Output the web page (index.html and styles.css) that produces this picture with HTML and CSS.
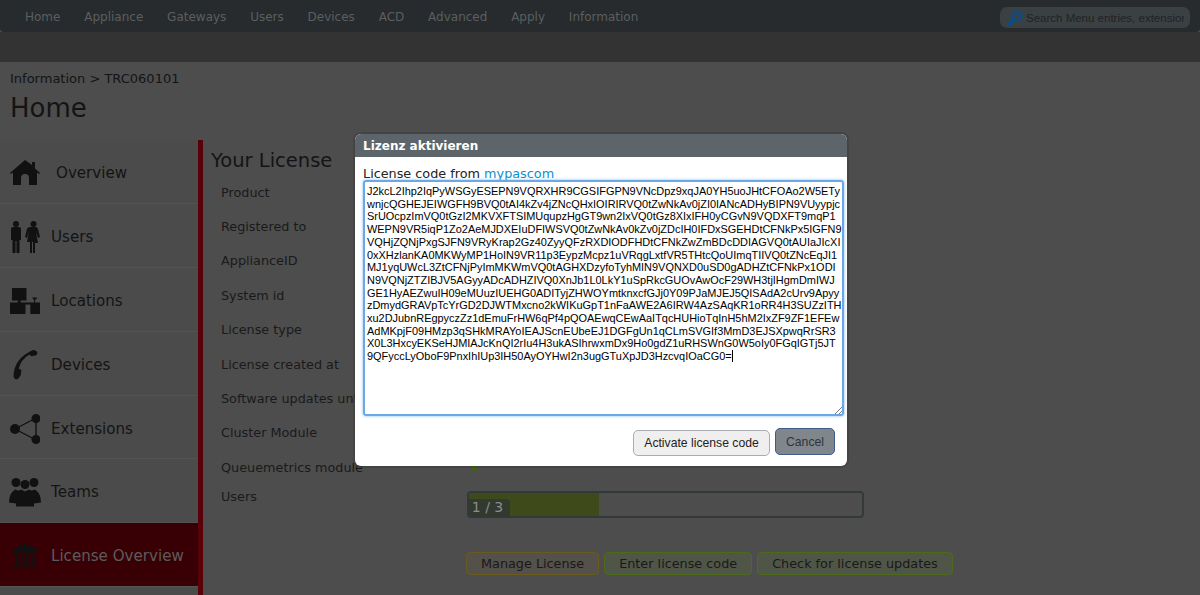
FILE: index.html
```html
<!DOCTYPE html>
<html lang="en">
<head>
<meta charset="utf-8">
<title>License Overview</title>
<link rel="stylesheet" href="styles.css">
</head>
<body>
<header class="topnav">
  <nav class="menu">
    <a>Home</a><a>Appliance</a><a>Gateways</a><a>Users</a><a>Devices</a><a>ACD</a><a>Advanced</a><a>Apply</a><a>Information</a>
  </nav>
  <div class="search">
    <svg class="search-icon" viewBox="0 0 16 16"><circle cx="10" cy="6" r="4.300" fill="none" stroke="#0d4c86" stroke-width="2.800"/><path d="M6.500 9.500 2 14" stroke="#0d4c86" stroke-width="3.600" stroke-linecap="round"/></svg>
    <span class="search-text">Search Menu entries, extensions</span>
  </div>
</header>
<div class="band"></div>
<main class="panel">
  <div class="crumb">Information &gt; TRC060101</div>
  <h1 class="title">Home</h1>
  <div class="columns">
    <aside class="side">
      <div class="item first">
        <svg class="ico" viewBox="0 0 30 26"><path d="M15 0 0 13l1 1 2-1.500V25h8v-7a4 4 0 0 1 8 0v7h8V12.500l2 1.500 1-1-5-4.500V2h-3v3z"/></svg>
        <span>Overview</span>
      </div>
      <div class="item">
        <svg class="ico tall" viewBox="0 0 30 32"><circle cx="6" cy="3" r="3"/><path d="M1 8q0-2 2-2h6q2 0 2 2v11H9.500v13H6.500V20h-1v12H2.500V19H1z"/><circle cx="23.500" cy="3" r="3"/><path d="M21 6h5q1 0 2 2l2 8-2 1-2-6 2 11h-3v11h-2V21h-1v11h-2V21h-3l2-11-2 7-2-1 2-8q1-2 3-2z"/></svg>
        <span>Users</span>
      </div>
      <div class="item">
        <svg class="ico" viewBox="0 0 31 27"><path d="M2 0h15v13h-6v2H8v-2H2zM0 15h31v2H0zM0 17h16v10H0zM21 17h10v10H21zM23 10h5l-1 2h-1v3h-1v-3h-1z"/></svg>
        <span>Locations</span>
      </div>
      <div class="item">
        <svg class="ico" viewBox="0 0 30 34"><path d="M24 0q4 0 5 3l-1 3-6 1-2-2Q10 11 8 21l3 2-1 6-3 4q-4 1-5-3Q2 10 24 0z"/></svg>
        <span>Devices</span>
      </div>
      <div class="item">
        <svg class="ico" viewBox="0 0 30 30"><path d="M5 15 26 4M5 15l21 11M26 4v22" fill="none" stroke="#111" stroke-width="1.400"/><circle cx="5" cy="15" r="5"/><circle cx="26" cy="4.500" r="4.500"/><circle cx="26" cy="25.500" r="4.500"/></svg>
        <span>Extensions</span>
      </div>
      <div class="item">
        <svg class="ico wide" viewBox="0 0 32 29"><circle cx="7" cy="5" r="4.500"/><circle cx="25" cy="5" r="4.500"/><circle cx="16" cy="7" r="4.500"/><path d="M0 25q0-9 6-13l3 1q2 0 3-1l4 2 4-2q1 1 3 1l3-1q6 4 6 13l-7 1v3H7v-3z"/></svg>
        <span>Teams</span>
      </div>
      <div class="item active">
        <svg class="ico" viewBox="-1 -1 32 28"><path d="M15 0 1 6v2h28V6zM3 9h24v2H3zM5 12h3v9H5zM11 12h3v9h-3zM16 12h3v9h-3zM22 12h3v9h-3zM3 22h24v2H3zM1 24.500h28V26H1z"/></svg>
        <span>License Overview</span>
      </div>
      <div class="item"></div>
    </aside>
    <section class="content">
      <h2 class="heading">Your License</h2>
      <div class="row"><span class="label">Product</span></div>
      <div class="row"><span class="label">Registered to</span></div>
      <div class="row"><span class="label">ApplianceID</span></div>
      <div class="row"><span class="label">System id</span></div>
      <div class="row"><span class="label">License type</span></div>
      <div class="row"><span class="label">License created at</span></div>
      <div class="row"><span class="label">Software updates until</span></div>
      <div class="row"><span class="label">Cluster Module</span></div>
      <div class="row"><span class="label">Queuemetrics module</span><span class="tick"></span></div>
      <div class="row users">
        <span class="label">Users</span>
        <div class="bar"><div class="fill"></div><span class="count">1 / 3</span></div>
      </div>
      <div class="actions">
        <button class="btn amber">Manage License</button>
        <button class="btn green">Enter license code</button>
        <button class="btn green">Check for license updates</button>
      </div>
    </section>
  </div>
</main>
<div class="dialog">
  <div class="dialog-title">Lizenz aktivieren</div>
  <div class="dialog-body">
    <div class="code-label">License code from <a class="link">mypascom</a></div>
    <div class="code">J2kcL2Ihp2IqPyWSGyESEPN9VQRXHR9CGSIFGPN9VNcDpz9xqJA0YH5uoJHtCFOAo2W5ETy
wnjcQGHEJEIWGFH9BVQ0tAI4kZv4jZNcQHxIOIRIRVQ0tZwNkAv0jZI0IANcADHyBIPN9VUyypjc
SrUOcpzImVQ0tGzI2MKVXFTSIMUqupzHgGT9wn2IxVQ0tGz8XIxIFH0yCGvN9VQDXFT9mqP1
WEPN9VR5iqP1Zo2AeMJDXEIuDFIWSVQ0tZwNkAv0kZv0jZDcIH0IFDxSGEHDtCFNkPx5IGFN9
VQHjZQNjPxgSJFN9VRyKrap2Gz40ZyyQFzRXDIODFHDtCFNkZwZmBDcDDIAGVQ0tAUIaJIcXI
0xXHzlanKA0MKWyMP1HoIN9VR11p3EypzMcpz1uVRqgLxtfVR5THtcQoUImqTIIVQ0tZNcEqJI1
MJ1yqUWcL3ZtCFNjPyImMKWmVQ0tAGHXDzyfoTyhMIN9VQNXD0uSD0gADHZtCFNkPx1ODI
N9VQNjZTZIBJV5AGyyADcADHZIVQ0XnJb1L0LkY1uSpRkcGUOvAwOcF29WH3tjIHgmDmIWJ
GE1HyAEZwuIH09eMUuzIUEHG0ADITyjZHWOYmtknxcfGJj0Y09PJaMJEJ5QISAdA2cUrv9Apyy
zDmydGRAVpTcYrGD2DJWTMxcno2kWIKuGpT1nFaAWE2A6IRW4AzSAqKR1oRR4H3SUZzITH
xu2DJubnREgpyczZz1dEmuFrHW6qPf4pQOAEwqCEwAaITqcHUHioTqInH5hM2IxZF9ZF1EFEw
AdMKpjF09HMzp3qSHkMRAYoIEAJScnEUbeEJ1DGFgUn1qCLmSVGIf3MmD3EJSXpwqRrSR3
X0L3HxcyEKSeHJMIAJcKnQI2rIu4H3ukASIhrwxmDx9Ho0gdZ1uRHSWnG0W5oIy0FGqIGTj5JT
9QFyccLyOboF9PnxIhIUp3IH50AyOYHwI2n3ugGTuXpJD3HzcvqIOaCG0=<span class="caret"></span><svg class="grip" viewBox="0 0 8 8"><path d="M1 8 8 1M5 8l3-3" stroke="#777" fill="none"/></svg></div>
    <div class="dialog-actions">
      <button class="dbtn activate">Activate license code</button>
      <button class="dbtn cancel">Cancel</button>
    </div>
  </div>
</div>
</body>
</html>
```
FILE: styles.css
```css
* { box-sizing: border-box; }
html, body { margin: 0; height: 595px; overflow: hidden; }
body {
  background: #4d4d4d;
  color: #141414;
  font-family: "DejaVu Sans", Verdana, sans-serif;
  display: flex;
  flex-direction: column;
}
.topnav {
  height: 32px;
  flex: none;
  background: #272b2d;
  display: flex;
  align-items: center;
  justify-content: space-between;
  padding: 0 10px 0 25px;
  border-radius: 0 0 4px 4px;
}
.menu { display: flex; gap: 23.800px; font-size: 12px; color: #5a5f60; padding-top: 1px; }
.search {
  width: 190px;
  height: 21px;
  margin-top: 3px;
  background: #3b4043;
  border-radius: 7px;
  display: flex;
  align-items: center;
  padding: 0 6px 0 7px;
  gap: 3px;
  overflow: hidden;
}
.search-icon { width: 16px; height: 16px; flex: none; }
.search-text {
  font: 11.500px "Liberation Sans", Arial, sans-serif;
  color: #1f2325;
  white-space: nowrap;
  overflow: hidden;
}
.band { height: 30px; flex: none; background: #333; }
.panel { flex: 1; min-height: 0; border-radius: 5px 5px 0 0; padding-top: 9px; overflow: hidden; }
.crumb { font-size: 13px; line-height: 16px; padding-left: 10px; }
.title { font-size: 26px; font-weight: 400; line-height: 30px; margin: 6px 0 17px; padding-left: 10px; }
.columns { display: flex; }
.side { width: 203px; flex: none; border-right: 5px solid #5a0008; height: 460px; }
.item {
  height: 63.900px;
  display: flex;
  align-items: center;
  gap: 11px;
  padding: 3px 0 0 10px;
  font-size: 15.100px;
  border-bottom: 1px solid #535353;
  background: #4b4b4b;
}
.item.first span { margin-left: 5px; }
.item.active { background: #380005; color: #5c5c5c; border-bottom-color: #555; }
.ico { width: 30px; height: 30px; flex: none; fill: #111; }
.ico.tall { height: 32px; }
.ico.wide { width: 32px; margin-left: -1px; margin-right: -1px; }
.content { flex: 1; padding-left: 8px; }
.heading { font-size: 19.500px; font-weight: 400; line-height: 24px; margin: 9px 0 0; height: 26px; }
.row { display: flex; height: 34.400px; align-items: center; padding-left: 10px; font-size: 12.800px; color: #1a1a1a; }
.label { width: 246px; flex: none; white-space: nowrap; }
.tick { width: 0; height: 0; border: 4px solid transparent; border-top: 6px solid #3e6a00; border-bottom: 0; margin: 3px 0 0 3px; }
.row.users { height: auto; align-items: flex-start; }
.users .label { line-height: 24px; }
.bar {
  width: 397px;
  height: 27px;
  margin-top: 6px;
  border: 2px solid #33393b;
  border-radius: 4px;
  position: relative;
  overflow: hidden;
}
.fill { width: 130px; height: 100%; background: #3f4a1a; }
.count {
  position: absolute;
  left: 0;
  bottom: 0;
  width: 41px;
  height: 17px;
  padding-right: 4px;
  background: #32392f;
  border-top-right-radius: 4px;
  color: #8c8c8c;
  font-size: 14px;
  line-height: 16px;
  text-align: center;
}
.actions { display: flex; gap: 5px; margin: 34px 0 0 255px; }
.btn {
  height: 23px;
  border-radius: 4px;
  font: 12.800px "DejaVu Sans", Verdana, sans-serif;
  color: #191919;
  padding: 0 14px;
  white-space: nowrap;
}
.amber { background: #54504a; border: 1px solid #6b5a1e; }
.green { background: #4f5647; border: 1px solid #4d6a1a; }
.dialog {
  position: absolute;
  left: 355px;
  top: 134px;
  width: 492px;
  height: 332px;
  background: #fff;
  border-radius: 6px;
  overflow: hidden;
  box-shadow: 0 0 0 2px rgba(60, 60, 60, .5);
  display: flex;
  flex-direction: column;
}
.dialog-title {
  height: 23px;
  flex: none;
  background: #5e656a;
  color: #fff;
  font-size: 12px;
  font-weight: 700;
  line-height: 24px;
  padding-left: 8px;
}
.dialog-body { flex: 1; padding: 10px 3px 0 8px; }
.code-label { font-size: 12.800px; line-height: 14px; color: #222; margin-bottom: -1px; white-space: nowrap; }
.link { color: #0a8fd0; }
.code {
  height: 236px;
  border: 2px solid #6aa8e8;
  border-radius: 3px;
  box-shadow: 0 0 3px #7fb6ee;
  padding: 3px 2px;
  font: 10.950px/12.700px "Liberation Sans", Arial, sans-serif;
  color: #000;
  white-space: pre;
  overflow: hidden;
  position: relative;
}
.caret { display: inline-block; width: 1px; height: 12px; background: #000; vertical-align: -2px; }
.grip { position: absolute; right: 0; bottom: 0; width: 8px; height: 8px; }
.dialog-actions { display: flex; justify-content: flex-end; align-items: flex-start; gap: 5px; margin-top: 12px; padding-right: 9px; }
.dbtn { border-radius: 5px; font: 12.200px "Liberation Sans", Arial, sans-serif; }
.activate { width: 137px; height: 26px; margin-top: 2px; padding-bottom: 2px; background: #efefef; border: 1px solid #a9acb0; color: #222; }
.cancel { width: 60px; height: 27px; background: #7f868c; border: 1px solid #3f5c88; color: #2f3438; }
```
